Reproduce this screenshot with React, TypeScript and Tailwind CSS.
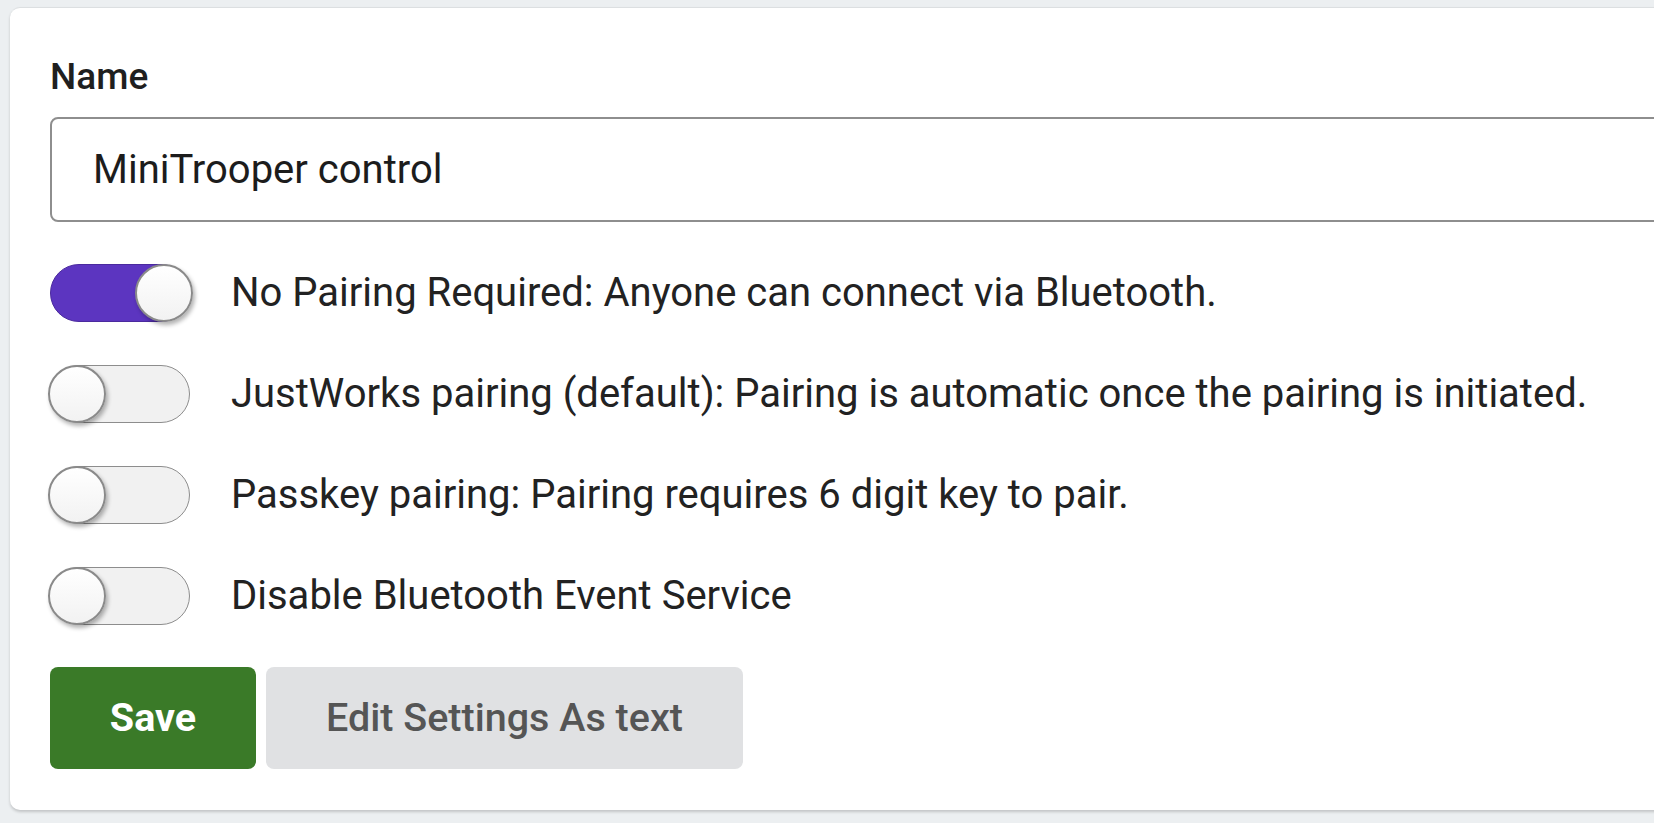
import React, { useState } from 'react';

type Option = { id: string; label: string };

const options: Option[] = [
  { id: 'none', label: 'No Pairing Required: Anyone can connect via Bluetooth.' },
  { id: 'justworks', label: 'JustWorks pairing (default): Pairing is automatic once the pairing is initiated.' },
  { id: 'passkey', label: 'Passkey pairing: Pairing requires 6 digit key to pair.' },
  { id: 'event', label: 'Disable Bluetooth Event Service' },
];

function Toggle({ on, onClick }: { on: boolean; onClick: () => void }) {
  return (
    <button
      type="button"
      onClick={onClick}
      className={
        'relative h-[58px] w-[140px] shrink-0 rounded-full border-[1.5px] ' +
        (on ? 'border-[#4b2a9e] bg-[#5c35c0]' : 'border-[#8d8d8d] bg-[#f1f1f1]')
      }
    >
      <span
        className={
          'absolute top-[-1.5px] h-[58px] w-[58px] rounded-full border-2 border-[#8a8a8a] bg-gradient-to-b from-white to-[#f2f2f2] shadow-[2px_3px_4px_rgba(0,0,0,0.3)] ' +
          (on ? 'left-[84px]' : 'left-[-3px]')
        }
      />
    </button>
  );
}

export default function App() {
  const [name, setName] = useState('MiniTrooper control');
  const [enabled, setEnabled] = useState<Record<string, boolean>>({ none: true });

  return (
    <div
      className="h-[823px] w-full overflow-hidden bg-[#eceff1] pl-[10px] pt-[7px]"
      style={{ fontFamily: 'Roboto, "Liberation Sans", sans-serif' }}
    >
      {/* Settings card */}
      <div className="w-[1720px] rounded-[10px] border-t border-[#dcdfe1] bg-white px-[40px] pb-[41px] pt-[46px] shadow-[0_2px_3px_rgba(0,0,0,0.18)]">
        <label className="block text-[37px] font-medium leading-[46px] text-[#1f1f1f]">Name</label>
        <input
          value={name}
          onChange={(e) => setName(e.target.value)}
          className="mt-[17px] block h-[105px] w-full rounded-[8px] border-2 border-[#8e8e8e] px-[41px] text-[40px] text-[#1c1c1c] outline-none"
        />

        <div className="mt-[42px] flex flex-col gap-[43px]">
          {options.map((opt) => (
            <div key={opt.id} className="flex h-[58px] items-center">
              <Toggle
                on={!!enabled[opt.id]}
                onClick={() => setEnabled({ ...enabled, [opt.id]: !enabled[opt.id] })}
              />
              <span className="ml-[41px] whitespace-nowrap text-[40px] leading-none text-[#222222]">
                {opt.label}
              </span>
            </div>
          ))}
        </div>

        {/* Actions */}
        <div className="mt-[42px] flex gap-[10px]">
          <button className="h-[102px] w-[206px] rounded-[8px] bg-[#3a7a28] text-[39.5px] font-bold text-white">
            Save
          </button>
          <button className="h-[102px] w-[477px] rounded-[8px] bg-[#e0e1e3] text-[39.5px] font-medium text-[#555555]">
            Edit Settings As text
          </button>
        </div>
      </div>
    </div>
  );
}
